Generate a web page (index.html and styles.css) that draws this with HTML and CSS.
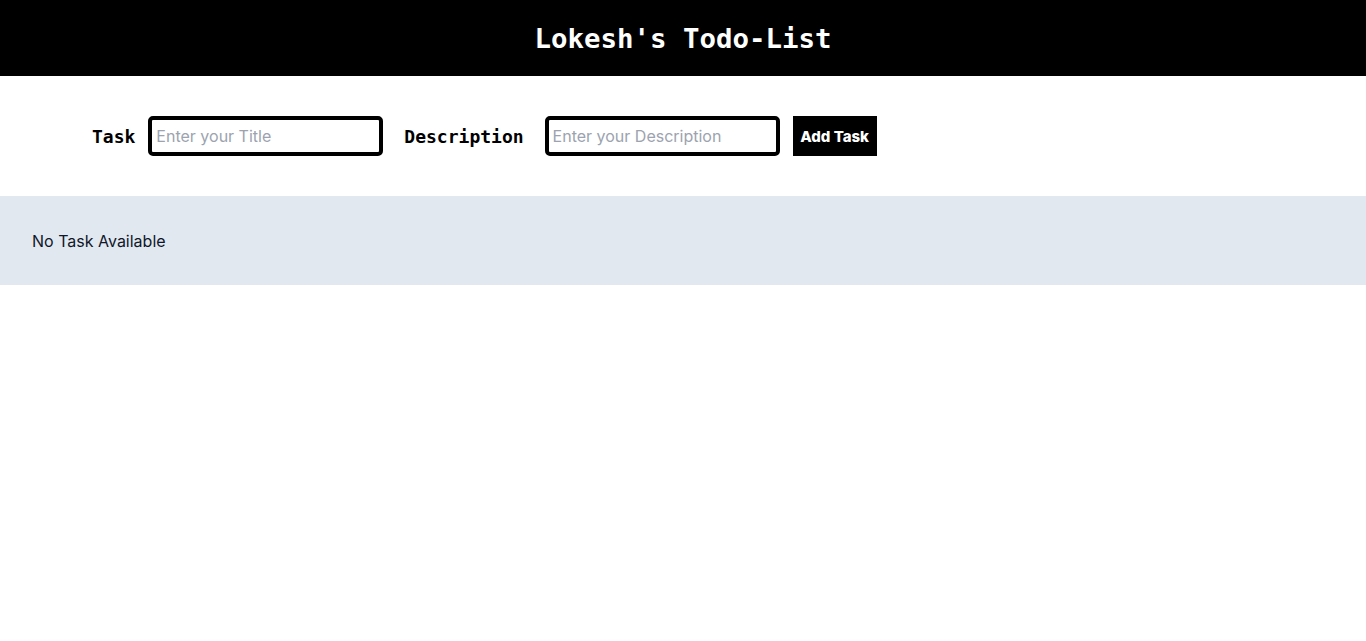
FILE: index.html
```html
<!DOCTYPE html>
<html>
<head>
<meta charset="utf-8">
<link rel="stylesheet" href="styles.css">
</head>
<body>
<header class="top">
  <h1 class="title">Lokesh's Todo-List</h1>
</header>
<form class="form">
  <label class="label label-task" for="t">Task</label>
  <input class="field field-task" id="t" type="text" placeholder="Enter your Title">
  <label class="label label-desc" for="d">Description</label>
  <input class="field field-desc" id="d" type="text" placeholder="Enter your Description">
  <button class="btn" type="button">Add Task</button>
</form>
<section class="list">
  <p class="empty">No Task Available</p>
</section>
</body>
</html>
```
FILE: styles.css
```css
html, body {
  margin: 0;
  padding: 0;
  background: #fff;
}
.top {
  height: 76px;
  background: #000;
  display: flex;
  align-items: center;
  justify-content: center;
}
.title {
  margin: 2px 0 0;
  color: #fff;
  font-family: "DejaVu Sans Mono", monospace;
  font-weight: bold;
  font-size: 27.4px;
  line-height: 1;
}
.form {
  display: flex;
  align-items: center;
  padding: 40px 0 40px 92px;
  margin: 0;
}
.label {
  font-family: "DejaVu Sans Mono", monospace;
  font-weight: bold;
  font-size: 18px;
  color: #000;
}
.label-task { margin-right: 13px; }
.label-desc { margin-right: 21px; }
.field {
  box-sizing: border-box;
  width: 235px;
  height: 40px;
  border: 4px solid #000;
  border-radius: 5px;
  padding: 0 4px;
  font-family: Inter, sans-serif;
  font-size: 16px;
  color: #000;
  outline: none;
}
.field::placeholder { color: #9ca3af; }
.field-task { margin-right: 21px; }
.field-desc { margin-right: 13px; }
.btn {
  box-sizing: border-box;
  width: 84px;
  height: 40px;
  background: #000;
  color: #fff;
  border: none;
  padding: 0;
  font-family: Inter, sans-serif;
  font-weight: 800;
  font-size: 15px;
  cursor: pointer;
}
.list {
  background: #e2e8f0;
  height: 89px;
  padding-left: 32px;
  display: flex;
  align-items: center;
}
.empty {
  margin: 0;
  font-family: Inter, sans-serif;
  font-size: 16px;
  color: #0f172a;
}
```
